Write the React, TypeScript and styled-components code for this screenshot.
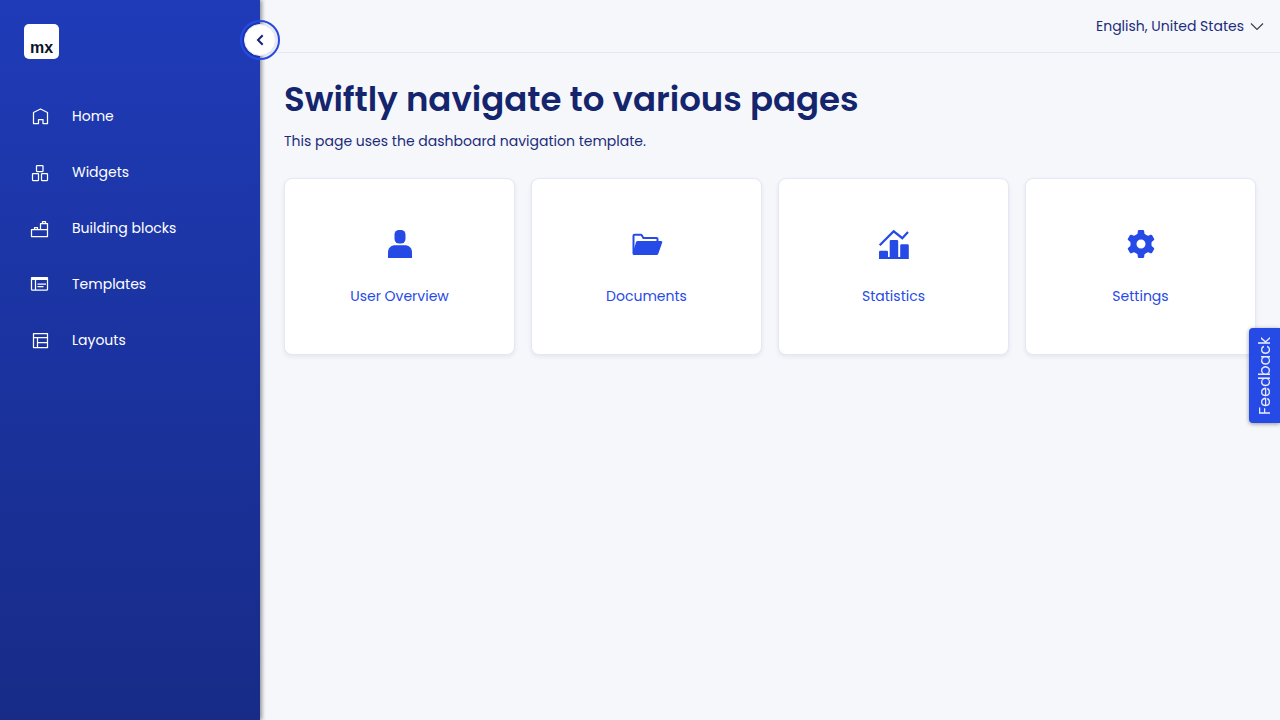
import React, { useState } from "react";
import styled, { createGlobalStyle } from "styled-components";

const GlobalStyle = createGlobalStyle`
  *, *::before, *::after { box-sizing: border-box; }
  body {
    margin: 0;
    background: #f6f7fb;
    color: #1b2c7c;
    font-family: Poppins, Inter, "Open Sans", sans-serif;
    font-size: 14px;
    line-height: 24px;
  }
  button, select { font: inherit; }
`;

const Shell = styled.div`
  display: flex;
  min-height: 100vh;
`;

const Sidebar = styled.aside<{ $collapsed: boolean }>`
  position: relative;
  z-index: 1;
  flex: none;
  width: ${(p) => (p.$collapsed ? "80px" : "260px")};
  padding-top: 24px;
  background: linear-gradient(#1f3bb8, #172b87);
  box-shadow: 2px 0 4px rgba(0, 0, 0, 0.4);
`;

const Logo = styled.a`
  display: flex;
  align-items: flex-end;
  justify-content: center;
  width: 35px;
  height: 35px;
  margin: 0 0 29px 24px;
  padding-bottom: 1px;
  border-radius: 5px;
  background: #fff;
  color: #0a1326;
  font-family: "Liberation Sans", Arial, sans-serif;
  font-size: 16px;
  font-weight: 700;
  line-height: 20px;
  text-decoration: none;
`;

const Toggle = styled.button`
  position: absolute;
  top: 24px;
  right: -16px;
  display: flex;
  align-items: center;
  justify-content: center;
  width: 32px;
  height: 32px;
  padding: 0;
  border: 1px solid #e7e7f3;
  border-radius: 50%;
  outline: 2px solid #264ae5;
  outline-offset: 2px;
  background: #fff;
  box-shadow: 0 0 4px rgba(0, 0, 0, 0.15);
  color: #14256e;
  cursor: pointer;
`;

const NavList = styled.ul`
  margin: 0;
  padding: 0;
  list-style: none;
`;

const NavLink = styled.a`
  display: flex;
  align-items: center;
  gap: 16px;
  height: 56px;
  padding: 0 24px;
  color: #fff;
  text-decoration: none;
  white-space: nowrap;
`;

const NavIcon = styled.span`
  display: flex;
  flex: none;
  justify-content: center;
  width: 32px;
`;

const Content = styled.div`
  flex: 1;
  min-width: 0;
`;

const TopBar = styled.header`
  display: flex;
  align-items: center;
  justify-content: flex-end;
  height: 53px;
  padding: 0 16px;
  border-bottom: 1px solid #e5e7f4;
`;

const LanguagePicker = styled.div`
  display: grid;
  align-items: center;
  > * { grid-area: 1 / 1; }
  > svg { justify-self: end; pointer-events: none; }
`;

const LanguageSelect = styled.select`
  appearance: none;
  padding: 0 20px 0 0;
  border: 0;
  background: transparent;
  color: #1b2c7c;
  cursor: pointer;
`;

const Main = styled.main`
  padding: 24px;
`;

const Title = styled.h1`
  margin: 0;
  color: #14256e;
  font-size: 34px;
  font-weight: 600;
  line-height: 44px;
`;

const Intro = styled.p`
  margin: 8px 0 25px;
`;

const CardGrid = styled.div`
  display: grid;
  grid-template-columns: repeat(4, minmax(0, 1fr));
  gap: 16px;
`;

const Card = styled.a`
  display: flex;
  flex-direction: column;
  align-items: center;
  gap: 24px;
  padding: 49px 16px 46px;
  border: 1px solid #e5e7f4;
  border-radius: 8px;
  background: #fff;
  box-shadow: 0 2px 4px rgba(20, 37, 110, 0.08);
  color: #264ae5;
  text-decoration: none;
`;

const Feedback = styled.button`
  position: fixed;
  top: 328px;
  right: 0;
  z-index: 2;
  width: 31px;
  height: 95px;
  padding: 0;
  border: 0;
  border-radius: 0 4px 4px 0;
  background: #264ae5;
  box-shadow: 0 -1px 4px rgba(0, 0, 0, 0.4);
  color: #e6eafc;
  font-size: 16px;
  line-height: 31px;
  writing-mode: vertical-rl;
  transform: rotate(180deg);
  cursor: pointer;
`;

const LineSvg = ({ children }: { children: React.ReactNode }) => (
  <svg
    width="20"
    height="20"
    viewBox="0 0 20 20"
    fill="none"
    stroke="currentColor"
    strokeWidth="1.25"
    strokeLinejoin="round"
    aria-hidden="true"
  >
    {children}
  </svg>
);

const SolidSvg = ({ children }: { children: React.ReactNode }) => (
  <svg width="32" height="32" viewBox="0 0 32 32" fill="currentColor" aria-hidden="true">
    {children}
  </svg>
);

const navItems = [
  {
    label: "Home",
    icon: <path d="M3.5 6.5 10.5 3l7 3.5v11h-4.5v-4H8.5v4h-5z" />,
  },
  {
    label: "Widgets",
    icon: (
      <>
        <rect x="6.5" y="3.5" width="6.5" height="6" rx=".5" />
        <rect x="2.5" y="11.5" width="6" height="7" rx=".5" />
        <rect x="11.5" y="11.5" width="6" height="7" rx=".5" />
      </>
    ),
  },
  {
    label: "Building blocks",
    icon: <path d="M1.5 11.5h16v7h-16zM10.500 11.500v-6h7v6M12.500 5.500v-2h3v2M4.500 11.500v-2h3v2" />,
  },
  {
    label: "Templates",
    icon: (
      <>
        <rect x="1.5" y="3.5" width="16" height="12.500" rx=".5" />
        <path d="M1.5 4.700h16" strokeWidth="2.6" />
        <path d="M5.500 5v11M7.500 10H16M7.500 12.700h6" />
      </>
    ),
  },
  {
    label: "Layouts",
    icon: <path d="M3.5 3.5h14v14h-14zM3.500 7.500h14M7.500 7.500v10M7.500 12.500h10" />,
  },
];

const gearAngles = [0, 60, 120, 180, 240, 300];

const cards = [
  {
    label: "User Overview",
    icon: (
      <>
        <rect x="10.5" y="2" width="11" height="13.5" rx="4.5" />
        <path d="M4 30v-5.500C4 20 7 17.300 11.500 17.300h9C25 17.300 28 20 28 24.500V30z" />
      </>
    ),
  },
  {
    label: "Documents",
    icon: (
      <>
        <path
          d="M2.5 25V7.700q0-1 1-1h6.300q.7 0 1.100.7l1.500 2.500h13.100q1 0 1 1V14"
          fill="none"
          stroke="currentColor"
          strokeWidth="2"
        />
        <path d="M6.700 13h23.500q1.500 0 1 1.500l-3.900 11.200q-.5 1.300-1.800 1.300H3q-1.500 0-1.400-1.500L5 14.300q.4-1.300 1.700-1.300z" />
      </>
    ),
  },
  {
    label: "Statistics",
    icon: (
      <>
        <path d="M1 31v-7q0-1.200 1.200-1.200h6.600q1.200 0 1.200 1.200v5h1.700V13.200q0-1.200 1.200-1.200h6.100q1.200 0 1.200 1.200V29h2V17.500q0-1.200 1.200-1.200h6.200q1.200 0 1.200 1.200V31z" />
        <path d="M1.700 17.200 15.700 3.300 24.300 10.200 30 4" fill="none" stroke="currentColor" strokeWidth="2.3" />
      </>
    ),
  },
  {
    label: "Settings",
    icon: (
      <>
        <circle cx="16" cy="16" r="7.5" fill="none" stroke="currentColor" strokeWidth="6" />
        {gearAngles.map((angle) => (
          <path
            key={angle}
            transform={`rotate(${angle} 16 16)`}
            d="M12.800 3.200Q12.900 2 14 2h4q1.100 0 1.200 1.200l.3 2.500 2 2.300h-11l2-2.300z"
          />
        ))}
      </>
    ),
  },
];

export default function App() {
  const [collapsed, setCollapsed] = useState(false);

  return (
    <>
      <GlobalStyle />
      <Shell>
        <Sidebar $collapsed={collapsed}>
          <Logo href="#">mx</Logo>
          <nav>
            <NavList>
              {navItems.map(({ label, icon }) => (
                <li key={label}>
                  <NavLink href="#" aria-label={label}>
                    <NavIcon><LineSvg>{icon}</LineSvg></NavIcon>
                    {!collapsed && label}
                  </NavLink>
                </li>
              ))}
            </NavList>
          </nav>
          <Toggle type="button" aria-label="Toggle sidebar" onClick={() => setCollapsed(!collapsed)}>
            <svg width="12" height="12" viewBox="0 0 12 12" fill="none" stroke="currentColor" strokeWidth="2" aria-hidden="true">
              <path d="M8.700 1.300 4 6l4.700 4.700" />
            </svg>
          </Toggle>
        </Sidebar>
        <Content>
          <TopBar>
            <LanguagePicker>
              <LanguageSelect aria-label="Language">
                <option>English, United States</option>
              </LanguageSelect>
              <svg width="14" height="14" viewBox="0 0 14 14" fill="none" stroke="#3b3e4c" strokeWidth="1.2" aria-hidden="true">
                <path d="M1 4.500 7 10.500l6-6" />
              </svg>
            </LanguagePicker>
          </TopBar>
          <Main>
            <Title>Swiftly navigate to various pages</Title>
            <Intro>This page uses the dashboard navigation template.</Intro>
            <CardGrid>
              {cards.map(({ label, icon }) => (
                <Card key={label} href="#">
                  <SolidSvg>{icon}</SolidSvg>
                  {label}
                </Card>
              ))}
            </CardGrid>
          </Main>
        </Content>
      </Shell>
      <Feedback type="button">Feedback</Feedback>
    </>
  );
}
